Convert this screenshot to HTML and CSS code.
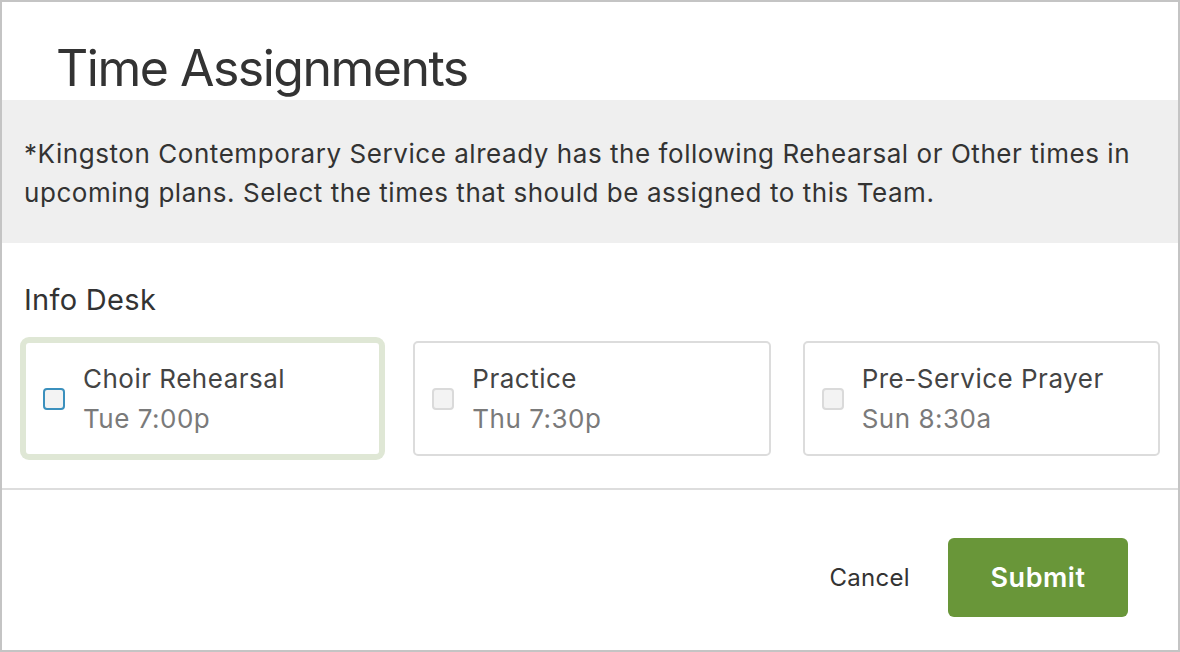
FILE: index.html
```html
<!DOCTYPE html>
<html lang="en">
<head>
    <meta charset="UTF-8">
    <meta name="viewport" content="width=device-width, initial-scale=1.0">
    <title>Time Assignments</title>
    <link rel="stylesheet" href="styles.css">
</head>
<body>
    <!-- Modal -->
    <div class="modal">
        <div class="modal-header">
            <h1>Time Assignments</h1>
        </div>

        <div class="notice">
            *Kingston Contemporary Service already has the following Rehearsal or Other times in upcoming plans. Select the times that should be assigned to this Team.
        </div>

        <div class="team-section">
            <h2>Info Desk</h2>
            <div class="time-grid">
                <label class="time-card focused">
                    <span class="checkbox active"></span>
                    <span class="time-text">
                        <span class="time-name">Choir Rehearsal</span>
                        <span class="time-when">Tue 7:00p</span>
                    </span>
                </label>
                <label class="time-card">
                    <span class="checkbox"></span>
                    <span class="time-text">
                        <span class="time-name">Practice</span>
                        <span class="time-when">Thu 7:30p</span>
                    </span>
                </label>
                <label class="time-card">
                    <span class="checkbox"></span>
                    <span class="time-text">
                        <span class="time-name">Pre-Service Prayer</span>
                        <span class="time-when">Sun 8:30a</span>
                    </span>
                </label>
            </div>
        </div>

        <div class="modal-footer">
            <button class="cancel-btn">Cancel</button>
            <button class="submit-btn">Submit</button>
        </div>
    </div>
</body>
</html>
```

FILE: styles.css
```css
body {
    margin: 0;
    background-color: #ffffff;
    font-family: Inter, "Noto Sans", sans-serif;
    color: #333333;
}
.modal {
    width: 1180px;
    height: 652px;
    box-sizing: border-box;
    border: 2px solid #c4c4c4;
    display: flex;
    flex-direction: column;
}
.modal-header {
    height: 98px;
    box-sizing: border-box;
    padding: 36px 54px 0;
}
.modal-header h1 {
    margin: 0;
    font-size: 50px;
    font-weight: 400;
    line-height: 60px;
    color: #333333;
    letter-spacing: -1.5px;
}
.notice {
    background-color: #efefef;
    padding: 34px 22px 31px;
    font-size: 26px;
    line-height: 39px;
    letter-spacing: 0.55px;
    color: #333333;
}
.team-section {
    padding: 37px 18px 32px 22px;
    border-bottom: 2px solid #dddddd;
}
.team-section h2 {
    margin: 0 0 21px;
    font-size: 29px;
    font-weight: 400;
    line-height: 40px;
    letter-spacing: 0.3px;
    color: #333333;
}
.time-grid {
    display: grid;
    grid-template-columns: repeat(3, 1fr);
    gap: 32px;
}
.time-card {
    display: flex;
    align-items: center;
    gap: 18px;
    height: 115px;
    box-sizing: border-box;
    padding: 0 17px;
    border: 2px solid #dcdcdc;
    border-radius: 5px;
    background-color: #ffffff;
}
.time-card.focused {
    border-color: #dfe7d5;
    box-shadow: 0 0 0 4px #dfe7d5;
}
.checkbox {
    width: 22px;
    height: 22px;
    box-sizing: border-box;
    border: 2px solid #dadada;
    border-radius: 4px;
    background-color: #f3f3f3;
    flex-shrink: 0;
}
.checkbox.active {
    border-color: #3b90bd;
}
.time-text {
    display: flex;
    flex-direction: column;
    letter-spacing: 0.5px;
}
.time-name {
    font-size: 26px;
    line-height: 40px;
    color: #444444;
}
.time-when {
    font-size: 26px;
    line-height: 40px;
    color: #7a7a7a;
}
.modal-footer {
    flex: 1;
    display: flex;
    justify-content: flex-end;
    align-items: flex-start;
    gap: 38px;
    padding: 48px 50px 0 0;
}
.cancel-btn, .submit-btn {
    font-family: inherit;
    font-size: 24px;
    border: none;
    cursor: pointer;
}
.cancel-btn {
    background: none;
    color: #333333;
    height: 79px;
    padding: 0;
    letter-spacing: 0.3px;
}
.submit-btn {
    width: 180px;
    height: 79px;
    border-radius: 6px;
    background-color: #699639;
    color: #ffffff;
    font-size: 27px;
    font-weight: 600;
    letter-spacing: 0.5px;
}
```
